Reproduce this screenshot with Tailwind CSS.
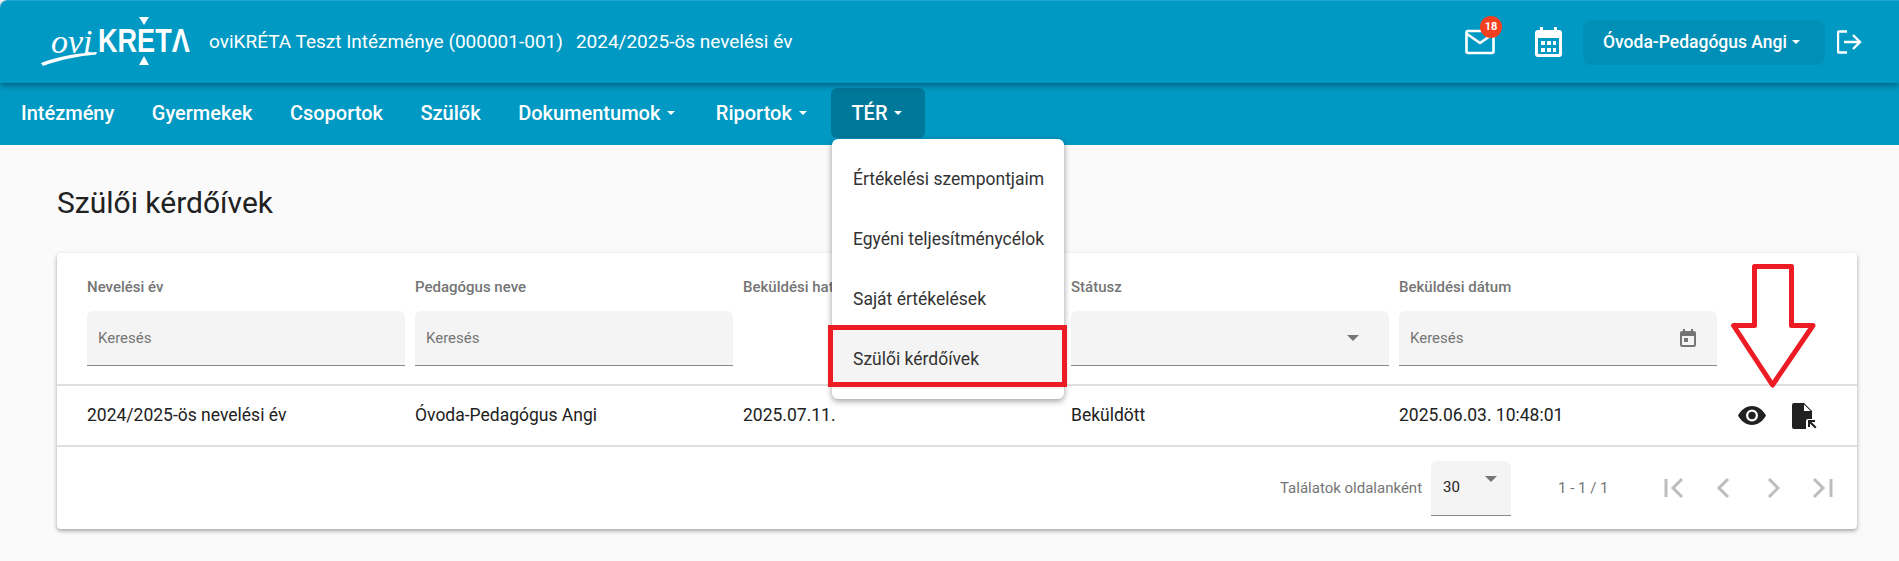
<!DOCTYPE html>
<html lang="hu">
<head>
  <meta charset="UTF-8" />
  <meta name="viewport" content="width=device-width, initial-scale=1.0" />
  <title>Szülői kérdőívek</title>
  <script src="https://cdn.jsdelivr.net/npm/@tailwindcss/browser@4"></script>
</head>
<body class="relative h-[561px] w-[1899px] overflow-hidden bg-[#fafafa] font-['Roboto',sans-serif] text-[#212121]">

  <!-- top bar -->
  <header class="relative z-10 flex h-[83px] items-center rounded-tl-lg border-t border-[#1ea5cb] bg-[#0099c3] text-white shadow-[0_2px_6px_rgba(0,50,70,0.6)]">
    <!-- logo -->
    <div class="relative ml-[41px] h-[82px] w-[150px] shrink-0">
      <span class="absolute left-[10px] top-[24px] font-['Liberation_Serif',serif] text-[34px] italic leading-none">ovi</span>
      <span class="absolute left-[57px] top-[23px] origin-left scale-x-[0.82] font-['Liberation_Sans',sans-serif] text-[33px] font-bold leading-none">KRETΛ</span>
      <svg class="absolute left-0 top-0" width="150" height="82" viewBox="0 0 150 82" fill="#fff">
        <path d="M98 16h10l-5 8zM103 55l5 9H98z" />
        <path d="M0 62C18 55 38 52 56 51l-1 2.500C38 55 18 59 2 65z" />
      </svg>
    </div>
    <span class="ml-[18px] text-[19px]">oviKRÉTA Teszt Intézménye (000001-001)</span>
    <span class="ml-[13px] text-[19px]">2024/2025-ös nevelési év</span>

    <div class="ml-auto flex items-center">
      <div class="relative">
        <svg width="30" height="26" viewBox="0 0 30 26" fill="none" stroke="#fff" stroke-width="2.6" stroke-linejoin="round"><rect x="1.5" y="2" width="27" height="22" rx="1.5" /><path d="M2 5l13 9 13-9" /></svg>
        <span class="absolute left-[15px] top-[-13px] flex h-[22px] w-[22px] items-center justify-center rounded-full bg-[#f4401f] text-[11px] font-bold">18</span>
      </div>
      <svg class="ml-[40px]" width="27" height="30" viewBox="0 0 27 30" fill="#fff"><path fill-rule="evenodd" d="M5 0h3v3h11V0h3v3h2a3 3 0 0 1 3 3v21a3 3 0 0 1-3 3H3a3 3 0 0 1-3-3V6a3 3 0 0 1 3-3h2zM3 11v16h21V11z" /><path d="M6 14h4v4H6zM12 14h4v4h-4zM18 14h3v4h-3zM6 21h4v4H6zM12 21h4v4h-4zM18 21h3v4h-3z" /></svg>
      <button class="ml-[21px] flex h-[45px] w-[242px] items-center whitespace-nowrap rounded-lg bg-[#008fb6] pl-[20px] text-[17.5px] font-medium">
        Óvoda-Pedagógus Angi
        <span class="ml-[5px] h-0 w-0 border-x-[4px] border-t-[4px] border-x-transparent border-t-white"></span>
      </button>
      <svg class="ml-[12px] mr-[37px]" width="25" height="24" viewBox="0 0 25 24" fill="none" stroke="#fff" stroke-width="2.4"><path d="M10 1.500H2a1 1 0 0 0-1 1v19a1 1 0 0 0 1 1h8M7 12h16M16 5l7 7-7 7" /></svg>
    </div>
  </header>

  <!-- menu -->
  <nav class="flex h-[62px] items-start gap-[37.5px] bg-[#0099c3] pl-[21px] pt-[5px] text-[20px] font-medium text-white">
    <a class="flex h-[50px] items-center">Intézmény</a>
    <a class="flex h-[50px] items-center">Gyermekek</a>
    <a class="flex h-[50px] items-center">Csoportok</a>
    <a class="flex h-[50px] items-center">Szülők</a>
    <a class="flex h-[50px] items-center gap-[7px]">Dokumentumok<span class="h-0 w-0 border-x-[4px] border-t-[4px] border-x-transparent border-t-white"></span></a>
    <a class="ml-[3px] flex h-[50px] items-center gap-[7px]">Riportok<span class="h-0 w-0 border-x-[4px] border-t-[4px] border-x-transparent border-t-white"></span></a>
    <a class="ml-[-13px] flex h-[50px] w-[94px] items-center gap-[7px] rounded-md bg-[#00789a] pl-[20px]">TÉR<span class="h-0 w-0 border-x-[4px] border-t-[4px] border-x-transparent border-t-white"></span></a>
  </nav>

  <main class="pl-[57px] pr-[42px]">
    <h1 class="flex h-[108px] items-center pt-[8px] text-[30px] leading-none">Szülői kérdőívek</h1>

    <section class="rounded-sm bg-white shadow-[0_2px_4px_rgba(0,0,0,0.35)]">
      <!-- filters -->
      <div class="grid h-[133px] grid-cols-[repeat(5,328px)_1fr] border-b-2 border-[#e0e0e0] pl-[30px] pt-[24px]">
        <div class="pr-[10px]">
          <div class="h-[34px] text-[15px] font-medium leading-[20px] text-[#757575]">Nevelési év</div>
          <div class="flex h-[55px] items-center rounded-t-md border-b border-[#888] bg-[#f4f4f4] px-[11px] text-[15px] text-[#757575]">Keresés</div>
        </div>
        <div class="pr-[10px]">
          <div class="h-[34px] text-[15px] font-medium leading-[20px] text-[#757575]">Pedagógus neve</div>
          <div class="flex h-[55px] items-center rounded-t-md border-b border-[#888] bg-[#f4f4f4] px-[11px] text-[15px] text-[#757575]">Keresés</div>
        </div>
        <div class="pr-[10px]">
          <div class="h-[34px] text-[15px] font-medium leading-[20px] text-[#757575]">Beküldési határidő</div>
        </div>
        <div class="pr-[10px]">
          <div class="h-[34px] text-[15px] font-medium leading-[20px] text-[#757575]">Státusz</div>
          <div class="flex h-[55px] items-center justify-end rounded-t-md border-b border-[#888] bg-[#f4f4f4] pr-[30px]">
            <span class="h-0 w-0 border-x-[6px] border-t-[6px] border-x-transparent border-t-[#757575]"></span>
          </div>
        </div>
        <div class="pr-[10px]">
          <div class="h-[34px] text-[15px] font-medium leading-[20px] text-[#757575]">Beküldési dátum</div>
          <div class="flex h-[55px] items-center justify-between rounded-t-md border-b border-[#888] bg-[#f4f4f4] pl-[11px] pr-[21px] text-[15px] text-[#757575]">
            Keresés
            <svg width="16" height="18" viewBox="0 0 16 18" fill="#757575"><path fill-rule="evenodd" d="M3 0h2v2h6V0h2v2h1a2 2 0 0 1 2 2v12a2 2 0 0 1-2 2H2a2 2 0 0 1-2-2V4a2 2 0 0 1 2-2h1zM2 7v9h12V7z" /><path d="M4 9h4v4H4z" /></svg>
          </div>
        </div>
      </div>

      <!-- row -->
      <div class="grid h-[61px] grid-cols-[repeat(5,328px)_1fr] items-center border-b-2 border-[#e0e0e0] pl-[30px] text-[17.5px]">
        <div>2024/2025-ös nevelési év</div>
        <div>Óvoda-Pedagógus Angi</div>
        <div>2025.07.11.</div>
        <div>Beküldött</div>
        <div>2025.06.03. 10:48:01</div>
        <div class="flex items-center pl-[11px]">
          <svg width="28" height="19" viewBox="0 0 28 19" fill="#212121"><path fill-rule="evenodd" d="M14 0C8 0 3 4 0 9.500 3 15 8 19 14 19s11-4 14-9.500C25 4 20 0 14 0zm0 3.500a6 6 0 1 1 0 12 6 6 0 0 1 0-12z" /><circle cx="14" cy="9.500" r="3.700" /></svg>
          <svg class="ml-[26px]" width="25" height="26" viewBox="0 0 25 26" fill="#212121"><path d="M2 0h10l8 8v8h-4a2 2 0 0 0-2 2v8H2a2 2 0 0 1-2-2V2a2 2 0 0 1 2-2z" /><path d="M12 1.500V8h6.500z" fill="#fff" /><path d="M16 17h7v2h-3.500l5 5-1.500 1.500-5-5V24h-2z" /></svg>
        </div>
      </div>

      <!-- paging -->
      <div class="flex h-[82px] items-center pl-[1223px]">
        <span class="w-[141px] whitespace-nowrap text-[15px] text-[#757575]">Találatok oldalanként</span>
        <div class="ml-[10px] flex h-[55px] w-[80px] items-center justify-between rounded-t-md border-b border-[#888] bg-[#f4f4f4] pl-[12px] pr-[14px] text-[15px]">
          30
          <span class="mb-[18px] h-0 w-0 border-x-[6px] border-t-[6px] border-x-transparent border-t-[#757575]"></span>
        </div>
        <span class="ml-[47px] w-[47px] whitespace-nowrap text-[15px] text-[#757575]">1 - 1 / 1</span>
        <div class="ml-[56px] flex items-center gap-[26px] text-[#bdbdbd]">
          <svg width="24" height="24" viewBox="0 0 24 24" fill="none" stroke="currentColor" stroke-width="3"><path d="M5 3v18M21 3l-9 9 9 9" /></svg>
          <svg width="24" height="24" viewBox="0 0 24 24" fill="none" stroke="currentColor" stroke-width="3"><path d="M17 3l-9 9 9 9" /></svg>
          <svg width="24" height="24" viewBox="0 0 24 24" fill="none" stroke="currentColor" stroke-width="3"><path d="M8 3l9 9-9 9" /></svg>
          <svg width="24" height="24" viewBox="0 0 24 24" fill="none" stroke="currentColor" stroke-width="3"><path d="M20 3v18M3 3l9 9-9 9" /></svg>
        </div>
      </div>
    </section>
  </main>

  <!-- open TÉR menu -->
  <div class="absolute left-[832px] top-[139px] z-20 w-[232px] rounded-md bg-white py-[10px] text-[17.5px] text-[#333] shadow-[0_2px_6px_rgba(0,0,0,0.4)]">
    <div class="flex h-[60px] items-center pl-[21px]">Értékelési szempontjaim</div>
    <div class="flex h-[60px] items-center pl-[21px]">Egyéni teljesítménycélok</div>
    <div class="flex h-[60px] items-center pl-[21px]">Saját értékelések</div>
    <div class="flex h-[60px] items-center bg-[#f4f4f4] pl-[21px]">Szülői kérdőívek</div>
  </div>

  <!-- red annotations -->
  <div class="absolute left-[828px] top-[325px] z-30 h-[62px] w-[239px] border-[5px] border-[#ed1c24]"></div>
  <svg class="absolute left-[1725px] top-[258px] z-30" width="96" height="134" viewBox="0 0 96 134" fill="none" stroke="#ed1c24" stroke-width="5" stroke-linejoin="round">
    <path d="M29.500 8.500h37v59h21.500L47.500 127 8.500 67.500h21z" />
  </svg>
</body>
</html>
